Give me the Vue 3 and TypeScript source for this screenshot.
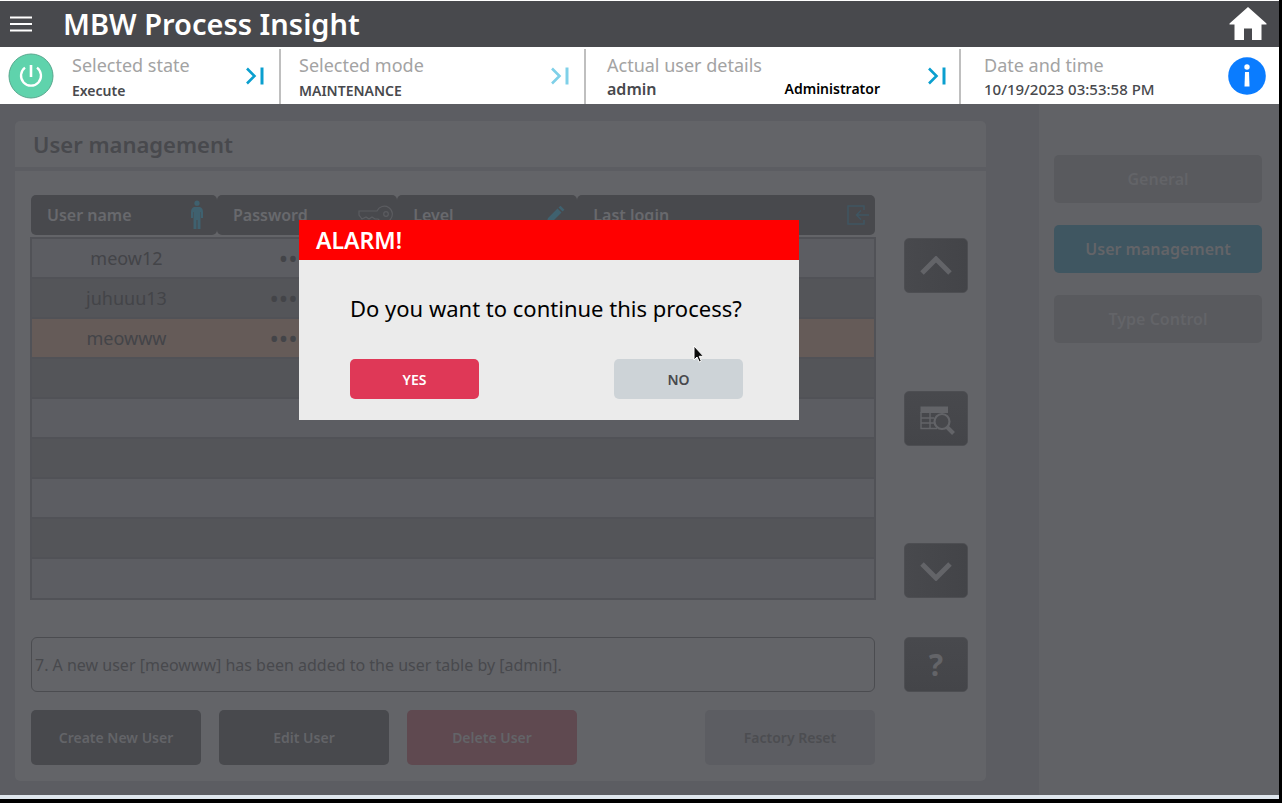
<script setup lang="ts">
import { ref } from 'vue'

interface UserRow {
  name: string
  password: string
}

const rows: UserRow[] = [
  { name: 'meow12', password: '••••••' },
  { name: 'juhuuu13', password: '••••••••' },
  { name: 'meowww', password: '••••••••' },
  ...Array.from({ length: 6 }, () => ({ name: '', password: '' })),
]
const selected = ref(2)
const sections: string[] = ['General', 'User management', 'Type Control']
const active = ref('User management')
const message = ref('7. A new user [meowww] has been added to the user table by [admin].')
</script>

<template>
  <div class="screen">
    <header class="titlebar">
      <button class="icon-btn menu" aria-label="Menu">
        <svg width="24" height="18" viewBox="0 0 24 18"><path d="M1 2.500H23M1 9H23M1 15.500H23" stroke="#fff" stroke-width="2" /></svg>
      </button>
      <h1>MBW Process Insight</h1>
      <button class="icon-btn home" aria-label="Home">
        <svg width="38" height="34" viewBox="0 0 38 34"><path d="M19 0L37.500 16.500V17.500H32.500V33H23V21.500H15V33H5.500V17.500H.5V16.500Z" fill="#fff" /></svg>
      </button>
    </header>

    <section class="status">
      <div class="cell state">
        <button class="icon-btn" aria-label="Power">
          <svg width="46" height="46" viewBox="0 0 46 46">
            <circle cx="23" cy="23" r="22" fill="#5fd3ac" stroke="#58a88e" stroke-width="1" />
            <path d="M17 14.700A10 10 0 1 0 29 14.700" fill="none" stroke="#fff" stroke-width="2.300" />
            <path d="M23 12V24" stroke="#fff" stroke-width="2.600" />
          </svg>
        </button>
        <div class="info">
          <span class="label">Selected state</span>
          <span class="value">Execute</span>
        </div>
        <button class="icon-btn" aria-label="Change state">
          <svg width="18" height="18" viewBox="0 0 18 18"><path d="M1 1.500L8.500 9L1 16.500" fill="none" stroke="#0a9fcf" stroke-width="2.600" /><path d="M16 .5V17.500" stroke="#0a9fcf" stroke-width="3" /></svg>
        </button>
      </div>
      <div class="cell">
        <div class="info">
          <span class="label">Selected mode</span>
          <span class="value">MAINTENANCE</span>
        </div>
        <button class="icon-btn" aria-label="Change mode">
          <svg width="18" height="18" viewBox="0 0 18 18"><path d="M1 1.500L8.500 9L1 16.500" fill="none" stroke="#7fd0e8" stroke-width="2.600" /><path d="M16 .5V17.500" stroke="#7fd0e8" stroke-width="3" /></svg>
        </button>
      </div>
      <div class="cell user">
        <div class="info">
          <span class="label">Actual user details</span>
          <span class="value pair"><span class="login">admin</span><span class="role">Administrator</span></span>
        </div>
        <button class="icon-btn" aria-label="Change user">
          <svg width="18" height="18" viewBox="0 0 18 18"><path d="M1 1.500L8.500 9L1 16.500" fill="none" stroke="#0a9fcf" stroke-width="2.600" /><path d="M16 .5V17.500" stroke="#0a9fcf" stroke-width="3" /></svg>
        </button>
      </div>
      <div class="cell date">
        <div class="info">
          <span class="label">Date and time</span>
          <span class="value">10/19/2023 03:53:58 PM</span>
        </div>
        <button class="icon-btn" aria-label="Information">
          <svg width="38" height="38" viewBox="0 0 38 38">
            <circle cx="19" cy="19" r="18.800" fill="#0a7cff" />
            <circle cx="19" cy="10" r="2.700" fill="#fff" />
            <path d="M17 15H21L21.500 29.500H16.500Z" fill="#fff" />
          </svg>
        </button>
      </div>
    </section>

    <div class="body">
      <main class="main">
        <h2>User management</h2>
        <div class="panel">
          <table>
            <colgroup><col class="c-name" /><col class="c-pass" /><col class="c-level" /><col /></colgroup>
            <thead>
              <tr>
                <th><div class="head name">User name
                  <svg width="14" height="30" viewBox="0 0 14 30" fill="#3f616f"><circle cx="7" cy="3.200" r="2.600" /><path d="M4 7H10Q13 8 13 12V18H11V12H10.500V29H7.500V20H6.500V29H3.500V12H3V18H1V12Q1 8 4 7Z" /></svg>
                </div></th>
                <th><div class="head key">Password
                  <svg width="36" height="20" viewBox="0 0 36 20" fill="none" stroke="#5b5c60" stroke-width="1.200"><path d="M20 6H2V10L5 14L9 12L12 14L15 12L18 14H21A8 8 0 1 0 20 6Z" /><circle cx="29" cy="9" r="2.300" /></svg>
                </div></th>
                <th><div class="head">Level
                  <svg width="20" height="20" viewBox="0 0 20 20" fill="#3f616f"><path d="M1 19L3 13L12.500 3.500L16.500 7.500L7 17ZM13.500 2.500L15.500 .8L19.500 4.800L17.500 6.500Z" /></svg>
                </div></th>
                <th><div class="head last">Last login
                  <svg width="24" height="22" viewBox="0 0 24 22" fill="none" stroke="#3f5662" stroke-width="1.500"><path d="M18 6V2H2V20H18V16M23 11H11M15 6.500L10.500 11L15 15.500" /></svg>
                </div></th>
              </tr>
            </thead>
            <tbody>
              <tr v-for="(row, i) in rows" :key="i" :class="{ selected: i === selected }" @click="selected = i">
                <td>{{ row.name }}</td>
                <td class="dots">{{ row.password }}</td>
                <td></td>
                <td></td>
              </tr>
            </tbody>
          </table>

          <div class="scroller">
            <button class="tool side-lit" aria-label="Scroll up">
              <svg width="32" height="20" viewBox="0 0 32 20"><path d="M2 17L16 3L30 17" fill="none" stroke="#636468" stroke-width="5" /></svg>
            </button>
            <button class="tool" aria-label="Search table">
              <svg width="40" height="34" viewBox="-4 -5 40 34" fill="none" stroke="#636468">
                <path d="M.5 .5H28V7H.5Z" fill="#636468" stroke="none" />
                <path d="M1 6V22.500H17M1 12H14M1 17H14M10 6V22" stroke-width="1.400" />
                <circle cx="22" cy="15.500" r="7.500" fill="#47484c" stroke-width="2.200" />
                <path d="M27 21L33.500 27.500" stroke-width="4" />
              </svg>
            </button>
            <button class="tool side-lit" aria-label="Scroll down">
              <svg width="32" height="20" viewBox="0 0 32 20"><path d="M2 3L16 17L30 3" fill="none" stroke="#636468" stroke-width="5" /></svg>
            </button>
          </div>

          <input v-model="message" class="message" type="text" readonly aria-label="Message" />
          <button class="tool help">?</button>

          <div class="actions">
            <button>Create New User</button>
            <button>Edit User</button>
            <button class="delete">Delete User</button>
            <button class="reset">Factory Reset</button>
          </div>
        </div>
      </main>

      <nav class="sections">
        <button v-for="s in sections" :key="s" :class="{ active: s === active }" @click="active = s">{{ s }}</button>
      </nav>
    </div>

    <div class="dialog" role="alertdialog" aria-labelledby="alarm-title">
      <h3 id="alarm-title">ALARM!</h3>
      <div class="dialog-body">
        <p>Do you want to continue this process?</p>
        <div class="choices">
          <button class="yes">YES</button>
          <button class="no">NO</button>
        </div>
      </div>
    </div>

    <svg class="pointer" width="12" height="18" viewBox="0 0 12 18"><path d="M1 1V15L4 12L6.300 17L8.300 16L6.200 11.300H10.500Z" fill="#0b0b0b" stroke="#fff" stroke-width="1" /></svg>
  </div>
</template>

<style>
body {
  background: #000;
}
</style>

<style scoped>
* {
  box-sizing: border-box;
}
.screen {
  position: relative;
  display: flex;
  flex-direction: column;
  min-height: calc(100vh - 4px);
  margin-right: 3px;
  border-top: 1px solid #fff;
  border-bottom: 4px solid #dfe6ed;
  background: #5c5d62;
  color: #434448;
  font-family: 'Noto Sans', sans-serif;
}
h1, h2, h3, p {
  margin: 0;
}
button {
  padding: 0;
  border: 0;
  border-radius: 5px;
  font: inherit;
  font-weight: 600;
  cursor: pointer;
}
svg {
  display: block;
  flex: none;
}
.icon-btn {
  flex: none;
  background: none;
}
.titlebar {
  display: flex;
  align-items: center;
  height: 46px;
  padding: 0 12px 0 9px;
  background: #48494d;
  color: #fff;
}
h1 {
  margin-left: 30px;
  font-size: 29px;
  font-weight: 600;
  line-height: 46px;
}
.home {
  margin-left: auto;
}
.status {
  display: grid;
  grid-template-columns: 281fr 305fr 375fr 318fr;
  height: 57px;
  padding-top: 2px;
  background: #fff;
}
.cell {
  display: flex;
  align-items: center;
  padding: 0 15px 1px 18px;
  border-right: 2px solid #bfbfbf;
}
.cell.state {
  gap: 18px;
  padding-left: 8px;
}
.cell.user {
  padding-left: 21px;
  padding-right: 13px;
}
.cell.date {
  padding-left: 23px;
  padding-right: 13px;
  border: 0;
}
.info {
  display: flex;
  flex: 1;
  flex-direction: column;
  padding-top: 2px;
}
.label {
  color: #a3a3a3;
  font-size: 18px;
  line-height: 28px;
}
.value {
  color: #48494d;
  font-size: 14px;
  font-weight: 600;
  line-height: 24px;
}
.user .value,
.date .value {
  line-height: 20px;
}
.user .info,
.date .info {
  padding-bottom: 4px;
}
.date .value {
  font-size: 15px;
  font-weight: 500;
}
.pair {
  display: flex;
  justify-content: space-between;
  padding-right: 48px;
}
.login {
  font-size: 16px;
}
.role {
  color: #000;
}
.body {
  display: flex;
  flex: 1;
}
.main {
  display: flex;
  flex: 1;
  flex-direction: column;
  gap: 4px;
  padding: 17px 53px 14px 15px;
}
h2 {
  padding: 0 18px;
  border-radius: 5px 5px 0 0;
  background: #636468;
  color: #48494d;
  font-size: 22px;
  font-weight: 600;
  line-height: 46px;
}
.panel {
  display: grid;
  flex: 1;
  grid-template-columns: 1fr 64px;
  align-content: start;
  column-gap: 28px;
  padding: 24px 18px 16px 15px;
  border-radius: 0 0 5px 5px;
  background: #636468;
}
table {
  width: 100%;
  table-layout: fixed;
  border-collapse: separate;
  border-spacing: 0;
}
.c-name {
  width: 22.1%;
}
.c-pass,
.c-level {
  width: 21.3%;
}
th {
  padding: 0 0 2px;
}
th:first-child {
  padding-left: 1px;
}
th:last-child {
  padding-right: 1px;
}
.head {
  display: flex;
  align-items: center;
  justify-content: space-between;
  height: 40px;
  padding: 0 12px 0 16px;
  border-radius: 5px;
  background: #48494d;
  color: #68696d;
  font-size: 16px;
  font-weight: 600;
}
.head.name {
  padding-right: 13px;
}
.head.key {
  padding-right: 4px;
}
.head.last {
  padding-right: 5px;
}
td {
  height: 40px;
  padding: 0;
  border-bottom: 2px solid #515257;
  background: #5c5d62;
  font-size: 18px;
  line-height: 24px;
  text-align: center;
}
td:first-child {
  padding-left: 4px;
  border-left: 2px solid #515257;
}
td:last-child {
  border-right: 2px solid #515257;
}
tr:first-child td {
  height: 42px;
  border-top: 2px solid #515257;
}
tr:last-child td {
  height: 41px;
}
tr:nth-child(even) td {
  background: #545559;
}
tr.selected td {
  background: #655b58;
}
td.dots {
  font-size: 25px;
}
.scroller {
  display: flex;
  flex-direction: column;
  justify-content: space-between;
  padding: 43px 0 2px;
}
.tool {
  display: flex;
  align-items: center;
  justify-content: center;
  height: 55px;
  border: 1px solid #4d4e52;
  background: linear-gradient(#48494d, #444549);
}
.tool.side-lit {
  background: linear-gradient(to right, #48494d, #434448);
}
.message {
  height: 55px;
  margin: 37px 1px 0;
  padding: 0 3px;
  border: 1px solid #4b4c50;
  border-radius: 6px;
  background: none;
  color: #48494d;
  font: inherit;
  font-size: 16px;
}
.help {
  margin-top: 37px;
  color: #636468;
  font-size: 30px;
  font-weight: 700;
}
.actions {
  display: flex;
  gap: 18px;
  margin: 18px 1px 0;
}
.actions button {
  width: 170px;
  height: 55px;
  background: #48494d;
  color: #636468;
  font-size: 14px;
}
.actions .delete {
  background: #5f4950;
}
.actions .reset {
  margin-left: auto;
  background: #5c5d62;
  color: #4c4d51;
}
.sections {
  display: flex;
  flex-direction: column;
  gap: 22px;
  width: 240px;
  padding: 51px 17px 0 15px;
  background: #616266;
}
.sections button {
  height: 48px;
  background: #595a5e;
  color: #636468;
  font-size: 16px;
}
.sections .active {
  background: #3f5661;
}
.dialog {
  position: absolute;
  top: 219px;
  left: 299px;
  width: 500px;
  background: #ebebeb;
}
h3 {
  padding: 0 17px;
  background: #f00;
  color: #fff;
  font-size: 23px;
  font-weight: 600;
  line-height: 40px;
}
.dialog-body {
  padding: 30px 56px 21px 51px;
}
p {
  color: #000;
  font-size: 22px;
  line-height: 36px;
  white-space: nowrap;
}
.choices {
  display: flex;
  justify-content: space-between;
  margin-top: 33px;
}
.choices button {
  width: 129px;
  height: 40px;
  background: #cdd3d7;
  color: #48494d;
  font-size: 14px;
}
.choices .yes {
  background: #df3857;
  color: #fff;
}
.pointer {
  position: absolute;
  top: 344px;
  left: 693px;
}
</style>
